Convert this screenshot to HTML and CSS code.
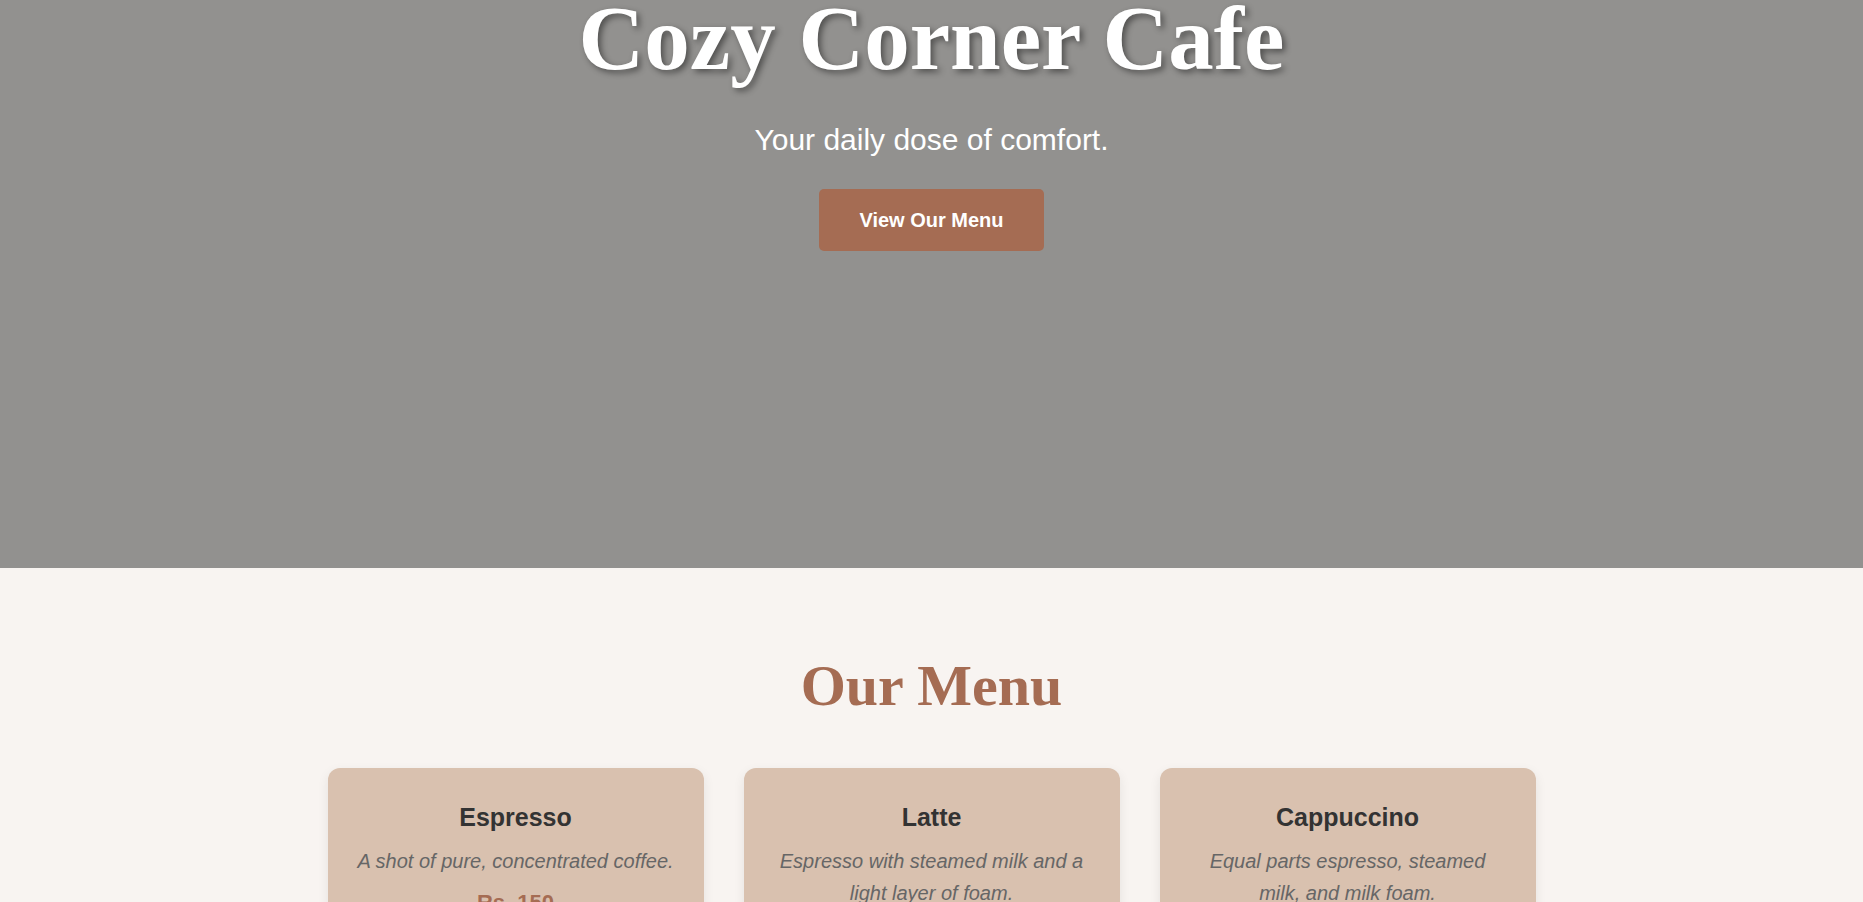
FILE: index.html
```html
<!DOCTYPE html>
<html lang="en">
<head>
<meta charset="utf-8">
<title>Cozy Corner Cafe</title>
<link rel="stylesheet" href="styles.css">
</head>
<body>
<header class="hero">
  <h1 class="hero-title">Cozy Corner Cafe</h1>
  <p class="hero-sub">Your daily dose of comfort.</p>
  <a class="hero-btn" href="#menu">View Our Menu</a>
</header>
<section class="menu" id="menu">
  <h2 class="menu-title">Our Menu</h2>
  <div class="menu-grid">
    <div class="card">
      <h3 class="card-title">Espresso</h3>
      <p class="card-desc">A shot of pure, concentrated coffee.</p>
      <p class="card-price">Rs. 150</p>
    </div>
    <div class="card">
      <h3 class="card-title">Latte</h3>
      <p class="card-desc">Espresso with steamed milk and a light layer of foam.</p>
      <p class="card-price">Rs. 220</p>
    </div>
    <div class="card">
      <h3 class="card-title">Cappuccino</h3>
      <p class="card-desc">Equal parts espresso, steamed milk, and milk foam.</p>
      <p class="card-price">Rs. 200</p>
    </div>
  </div>
</section>
</body>
</html>
```
FILE: styles.css
```css
* { box-sizing: border-box; }
html, body { margin: 0; padding: 0; }
body {
  font-family: "Liberation Sans", Arial, sans-serif;
  background: #f8f4f1;
  color: #333;
}
.hero {
  height: 568px;
  background: #92918f;
  display: flex;
  flex-direction: column;
  align-items: center;
  text-align: center;
  color: #fff;
}
.hero-title {
  margin: 0 0 46px;
  font-family: "Liberation Serif", "Times New Roman", serif;
  font-weight: 700;
  font-size: 91px;
  line-height: 0.85;
  text-shadow: 3px 3px 6px rgba(0, 0, 0, 0.45);
}
.hero-sub {
  margin: 0 0 32px;
  font-size: 30px;
  line-height: 34px;
}
.hero-btn {
  display: inline-block;
  width: 225px;
  height: 62px;
  line-height: 62px;
  background: #a56c53;
  color: #fff;
  font-weight: 700;
  font-size: 20px;
  text-decoration: none;
  border-radius: 5px;
}
.menu {
  padding: 86px 0 60px;
  text-align: center;
}
.menu-title {
  margin: 0 0 51px;
  font-family: "Liberation Serif", "Times New Roman", serif;
  font-weight: 700;
  font-size: 58px;
  line-height: 63px;
  color: #a56c53;
}
.menu-grid {
  width: 1208px;
  margin: 0 auto;
  display: grid;
  grid-template-columns: repeat(3, 1fr);
  gap: 40px;
}
.card {
  background: #d9c1af;
  border-radius: 12px;
  padding: 35px 28px 30px;
  box-shadow: 0 4px 12px rgba(0, 0, 0, 0.08);
}
.card-title {
  margin: 0 0 13px;
  font-size: 25px;
  line-height: 29px;
  font-weight: 700;
  color: #333;
}
.card-desc {
  margin: 0 0 13px;
  font-size: 20px;
  line-height: 32px;
  font-style: italic;
  color: #666;
}
.card-price {
  margin: 0;
  font-size: 22px;
  line-height: 26px;
  font-weight: 700;
  color: #a56c53;
}
```
